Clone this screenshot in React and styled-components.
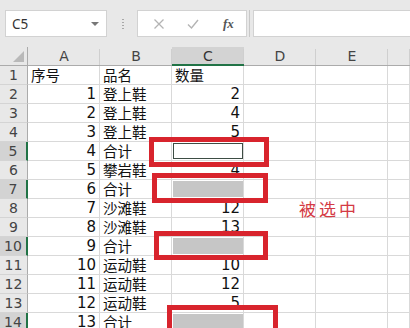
import React from "react";
import styled, { createGlobalStyle, css } from "styled-components";

const GlobalStyle = createGlobalStyle`
  html, body { margin: 0; padding: 0; background: #ffffff; overflow: hidden; }
  body { font-family: "Noto Sans CJK SC", "Noto Sans", sans-serif; }
`;

const Page = styled.div`
  position: relative;
  width: 410px;
  height: 328px;
  overflow: hidden;
  display: flex;
  flex-direction: column;
  background: #fff;
`;

const FormulaBar = styled.div`
  height: 47px;
  flex: none;
  box-sizing: border-box;
  background: #e8e8e8;
  display: flex;
  align-items: flex-start;
  padding: 10px 0 0 5px;
`;

const NameBox = styled.div`
  width: 102px;
  height: 27px;
  box-sizing: border-box;
  background: #fff;
  border: 1px solid #d2d2d2;
  display: flex;
  align-items: center;
  justify-content: space-between;
  padding: 0 7px 0 6px;
  font-family: "Noto Sans", sans-serif;
  font-size: 13.5px;
  color: #333;
`;

const Arrow = styled.span`
  width: 0;
  height: 0;
  border-left: 4px solid transparent;
  border-right: 4px solid transparent;
  border-top: 4px solid #777;
`;

const Grip = styled.div`
  width: 2px;
  height: 13px;
  margin: 8px 13px 0 15px;
  background-image: radial-gradient(circle, #a8a8a8 0.8px, transparent 1px);
  background-size: 2px 3px;
`;

const FxButtons = styled.div`
  width: 110px;
  height: 27px;
  box-sizing: border-box;
  background: #fff;
  border: 1px solid #d2d2d2;
  display: flex;
  align-items: center;
  padding-left: 15px;
  gap: 22px;
`;

const IconSlot = styled.span`
  width: 12px;
  height: 12px;
  display: flex;
  align-items: center;
  justify-content: center;
`;

const FxLabel = styled.span`
  font-family: "Liberation Serif", serif;
  font-style: italic;
  font-weight: bold;
  font-size: 13px;
  color: #555;
  margin-left: 2px;
`;

const Divider = styled.div`
  width: 1px;
  height: 27px;
  background: #c8c8c8;
  margin: 0 3px 0 2px;
`;

const FormulaInput = styled.div`
  flex: 1;
  height: 27px;
  box-sizing: border-box;
  background: #fff;
  border: 1px solid #d2d2d2;
  border-right: none;
`;

const Grid = styled.div`
  display: grid;
  grid-template-columns: 28px repeat(5, 72px) 1fr;
  grid-auto-rows: 19px;
`;

const Corner = styled.div`
  background: #e8e8e8;
  border-right: 1px solid #ababab;
  border-bottom: 1px solid #ababab;
  box-sizing: border-box;
  position: relative;
  &::after {
    content: "";
    position: absolute;
    right: 3px;
    bottom: 3px;
    width: 11px;
    height: 11px;
    background: #b9b9b9;
    clip-path: polygon(100% 0, 100% 100%, 0 100%);
  }
`;

const ColHead = styled.div`
  box-sizing: border-box;
  background: #e8e8e8;
  border-bottom: 1px solid #ababab;
  display: flex;
  align-items: center;
  justify-content: center;
  font-family: "DejaVu Sans", sans-serif;
  font-size: 14px;
  color: #444;
  position: relative;
  &::after {
    content: "";
    position: absolute;
    right: 0;
    top: 2px;
    bottom: 0;
    width: 1px;
    background: #cfcfcf;
  }
  ${(p) =>
    p.$active &&
    css`
      background: #d3d3d3;
      border-bottom: 2px solid #217346;
      color: #333;
    `}
`;

const RowHead = styled.div`
  box-sizing: border-box;
  background: #e8e8e8;
  border-right: 1px solid #ababab;
  border-bottom: 1px solid #d4d4d4;
  display: flex;
  align-items: center;
  justify-content: center;
  font-family: "DejaVu Sans", sans-serif;
  font-size: 14px;
  color: #444;
  line-height: 18px;
  ${(p) =>
    p.$active &&
    css`
      background: #d3d3d3;
      border-right: 2px solid #217346;
    `}
`;

const Cell = styled.div`
  box-sizing: border-box;
  border-right: 1px solid #d9d9d9;
  border-bottom: 1px solid #d9d9d9;
  display: flex;
  align-items: flex-end;
  justify-content: ${(p) => (p.$num ? "flex-end" : "flex-start")};
  padding: 0 3px 0 3px;
  font-family: ${(p) =>
    p.$num ? `"DejaVu Sans", sans-serif` : `"Noto Sans CJK SC", "Noto Sans", sans-serif`};
  font-size: ${(p) => (p.$num ? "15px" : "14.5px")};
  line-height: 18px;
  color: #111;
  white-space: nowrap;
  overflow: visible;
  position: relative;
`;

const Selection = styled.div`
  position: absolute;
  left: 1px;
  top: 1px;
  right: 0;
  bottom: 1px;
  ${(p) =>
    p.$kind === "active"
      ? css`
          background: #fff;
          border: 1px solid #3d4d44;
        `
      : css`
          background: #c6c6c6;
        `}
`;

const RedBox = styled.div`
  position: absolute;
  box-sizing: border-box;
  border: 5px solid #d8242d;
`;

const Note = styled.div`
  position: absolute;
  left: 299px;
  top: 197px;
  font-family: "Noto Sans CJK SC", sans-serif;
  font-size: 17px;
  letter-spacing: 3px;
  line-height: 24px;
  color: #d43a44;
`;

const rows = [
  ["序号", "品名", "数量"],
  [1, "登上鞋", 2],
  [2, "登上鞋", 4],
  [3, "登上鞋", 5],
  [4, "合计", ""],
  [5, "攀岩鞋", 4],
  [6, "合计", ""],
  [7, "沙滩鞋", 12],
  [8, "沙滩鞋", 13],
  [9, "合计", ""],
  [10, "运动鞋", 10],
  [11, "运动鞋", 12],
  [12, "运动鞋", 5],
  [13, "合计", ""],
];

const selected = { 5: "active", 7: "range", 10: "range", 14: "range" };
const boxes = [
  { left: 149, top: 137, width: 120, height: 30 },
  { left: 152, top: 173, width: 116, height: 30 },
  { left: 154, top: 231, width: 114, height: 29 },
  { left: 167, top: 305, width: 111, height: 32 },
];

const XIcon = () => (
  <svg width="12" height="12" viewBox="0 0 12 12">
    <path d="M1.5 1.5 L10.5 10.5 M10.5 1.5 L1.5 10.5" stroke="#b4b4b4" strokeWidth="1.3" fill="none" />
  </svg>
);

const CheckIcon = () => (
  <svg width="12" height="12" viewBox="0 0 12 12">
    <path d="M1 6.5 L4.5 10 L11 2" stroke="#b4b4b4" strokeWidth="1.4" fill="none" />
  </svg>
);

export default function App() {
  return (
    <>
      <GlobalStyle />
      <Page>
        <FormulaBar>
          <NameBox>
            <span>C5</span>
            <Arrow />
          </NameBox>
          <Grip />
          <FxButtons>
            <IconSlot><XIcon /></IconSlot>
            <IconSlot><CheckIcon /></IconSlot>
            <FxLabel>fx</FxLabel>
          </FxButtons>
          <Divider />
          <FormulaInput />
        </FormulaBar>
        <Grid>
          <Corner />
          {["A", "B", "C", "D", "E", ""].map((c, i) => (
            <ColHead key={i} $active={c === "C"}>{c}</ColHead>
          ))}
          {rows.map((r, i) => {
            const n = i + 1;
            const sel = selected[n];
            return (
              <React.Fragment key={n}>
                <RowHead $active={!!sel}>{n}</RowHead>
                <Cell $num={typeof r[0] === "number"}>{r[0]}</Cell>
                <Cell>{r[1]}</Cell>
                <Cell $num={typeof r[2] === "number"}>
                  {sel && <Selection $kind={sel} />}
                  {r[2]}
                </Cell>
                <Cell />
                <Cell />
                <Cell />
              </React.Fragment>
            );
          })}
        </Grid>
        {boxes.map((b, i) => (
          <RedBox key={i} style={b} />
        ))}
        <Note>被选中</Note>
      </Page>
    </>
  );
}
